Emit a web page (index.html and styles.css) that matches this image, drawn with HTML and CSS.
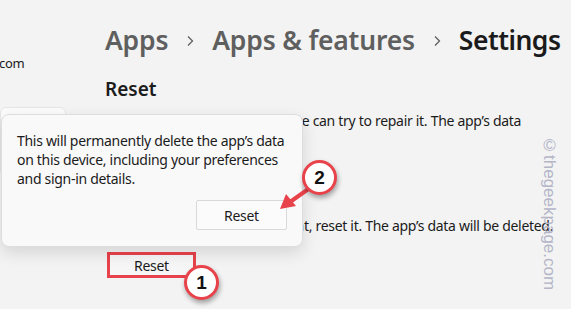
FILE: index.html
```html
<!DOCTYPE html>
<html lang="en">
<head>
  <meta charset="UTF-8">
  <meta name="viewport" content="width=device-width, initial-scale=1.0">
  <title>Apps &amp; features - Settings</title>
  <link rel="stylesheet" href="styles.css">
</head>
<body>
  <div class="window">
    <aside class="sidebar">
      <div class="account">com</div>
      <div class="nav-card"></div>
    </aside>

    <main class="page">
      <nav class="crumbs">
        <span>Apps</span>
        <svg class="chev" width="8" height="12" viewBox="0 0 8 12"><path d="M2 1.5 L6.5 6 L2 10.5" fill="none" stroke="currentColor" stroke-width="1.3"/></svg>
        <span>Apps &amp; features</span>
        <svg class="chev" width="8" height="12" viewBox="0 0 8 12"><path d="M2 1.5 L6.5 6 L2 10.5" fill="none" stroke="currentColor" stroke-width="1.3"/></svg>
        <span class="current">Settings</span>
      </nav>

      <h2 class="section">Reset</h2>
      <p class="note">If this app isn’t working right, we can try to repair it. The app’s data won’t be affected.</p>
      <button class="btn repair">Repair</button>
      <p class="note wide">If this app still isn’t working right, reset it. The app’s data will be deleted.</p>
      <button class="btn marked">Reset</button>
    </main>
  </div>

  <!-- confirmation flyout -->
  <div class="flyout">
    <p>This will permanently delete the app’s data on this device, including your preferences and sign-in details.</p>
    <div class="flyout-actions">
      <button class="btn big">Reset</button>
    </div>
  </div>

  <!-- annotations -->
  <svg class="arrow" width="50" height="40" viewBox="0 0 50 40">
    <path d="M36 5 L12 22" stroke="#e8424b" stroke-width="4" stroke-linecap="round"/>
    <path d="M2 29 L8 14 L18 26 Z" fill="#e8424b"/>
  </svg>
  <div class="step step-two">2</div>
  <div class="step step-one">1</div>

  <div class="watermark">©thegeekpage.com</div>
</body>
</html>
```

FILE: styles.css
```css
* {
  margin: 0;
  padding: 0;
  box-sizing: border-box;
}

body {
  width: 571px;
  height: 309px;
  overflow: hidden;
  position: relative;
  background: #f3f3f3;
  color: #1b1b1b;
  font-family: 'Noto Sans', sans-serif;
  font-size: 14px;
  letter-spacing: -0.3px;
}

.window {
  display: grid;
  grid-template-columns: 105px 1fr;
  height: 100%;
}

.sidebar {
  padding-top: 55px;
  overflow: hidden;
}

.account {
  font-size: 13px;
  line-height: 16px;
  margin-left: -1px;
}

.nav-card {
  margin-top: 36px;
  width: 66px;
  height: 70px;
  background: #fbfbfb;
  border: 1px solid #e6e6e6;
  border-radius: 6px;
}

.page {
  padding-top: 22px;
}

.crumbs {
  display: flex;
  align-items: center;
  gap: 18px;
  font-size: 26.5px;
  font-weight: 600;
  letter-spacing: -0.2px;
  color: #5f5f5f;
  white-space: nowrap;
  line-height: 36px;
}

.crumbs .chev {
  color: #5f5f5f;
  margin-top: 2px;
}

.crumbs .current {
  color: #1b1b1b;
  letter-spacing: -0.5px;
}

.section {
  margin-top: 19px;
  font-size: 19px;
  font-weight: 600;
  line-height: 24px;
  letter-spacing: 0;
}

.note {
  margin-top: 10px;
  line-height: 20px;
  max-width: 425px;
}

.note.wide {
  max-width: none;
  white-space: nowrap;
}

.btn {
  font-family: inherit;
  font-size: 14px;
  letter-spacing: inherit;
  color: #1b1b1b;
  background: #fbfbfb;
  border: 1px solid #d6d6d6;
  border-radius: 3px;
  height: 28px;
  width: 86px;
  margin-top: 10px;
}

.btn.repair {
  margin-bottom: 17px;
}

.btn.marked {
  margin-top: 16px;
  margin-left: 2px;
  height: 26px;
  width: 89px;
  border: 3px solid #e8424b;
  border-radius: 0;
  background: #f6f6f6;
}

.flyout {
  position: absolute;
  left: 1px;
  top: 114px;
  width: 302px;
  height: 133px;
  background: #f9f9f9;
  border: 1px solid #dedede;
  border-radius: 8px;
  box-shadow: 0 6px 16px rgba(0, 0, 0, 0.12);
  padding: 16px 15px 0 15px;
}

.flyout p {
  line-height: 19px;
}

.flyout-actions {
  display: flex;
  justify-content: flex-end;
  margin-top: 12px;
}

.btn.big {
  width: 91px;
  height: 30px;
  margin: 0;
  border-color: #d9d9d9;
  border-radius: 2px;
}

.step {
  position: absolute;
  width: 35px;
  height: 35px;
  border-radius: 50%;
  background: #fff;
  border: 3px solid #e8424b;
  box-shadow: 1px 3px 5px rgba(0, 0, 0, 0.35);
  font-family: 'Liberation Sans', Arial, sans-serif;
  font-weight: bold;
  font-size: 19px;
  letter-spacing: 0;
  line-height: 29px;
  text-align: center;
  color: #111;
}

.step-one {
  left: 184px;
  top: 265px;
}

.step-two {
  left: 302px;
  top: 160px;
}

.arrow {
  position: absolute;
  left: 278px;
  top: 180px;
}

.watermark {
  position: absolute;
  left: 539px;
  top: 136px;
  writing-mode: vertical-rl;
  font-family: 'Liberation Sans', Arial, sans-serif;
  font-size: 17px;
  letter-spacing: 0;
  color: #b4b6c8;
}
```
